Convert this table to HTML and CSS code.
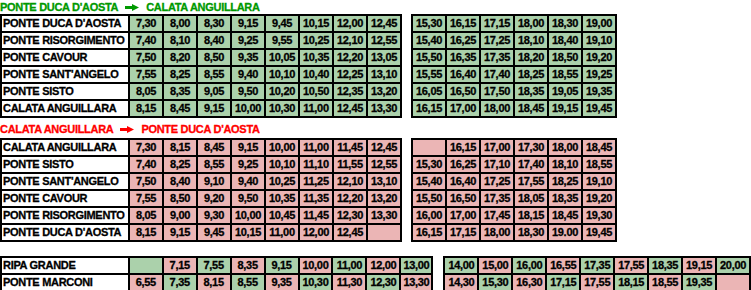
FILE: index.html
```html
<!DOCTYPE html>
<html lang="it">
<head>
<meta charset="utf-8">
<title>Orari battello</title>
<link rel="stylesheet" href="styles.css">
</head>
<body>
<div class="title green-t"><span>PONTE DUCA D'AOSTA</span><svg class="arrow" viewBox="0 0 14 7" width="14" height="7"><rect x="0" y="2" width="8" height="3"/><polygon points="7,0 14,3.5 7,7"/></svg><span>CALATA ANGUILLARA</span></div>
<div class="pair">
<table class="tt">
<tr><td class="n">PONTE DUCA D'AOSTA</td><td class="g">7,30</td><td class="g">8,00</td><td class="g">8,30</td><td class="g">9,15</td><td class="g">9,45</td><td class="g">10,15</td><td class="g">12,00</td><td class="g">12,45</td></tr>
<tr><td class="n">PONTE RISORGIMENTO</td><td class="g">7,40</td><td class="g">8,10</td><td class="g">8,40</td><td class="g">9,25</td><td class="g">9,55</td><td class="g">10,25</td><td class="g">12,10</td><td class="g">12,55</td></tr>
<tr><td class="n">PONTE CAVOUR</td><td class="g">7,50</td><td class="g">8,20</td><td class="g">8,50</td><td class="g">9,35</td><td class="g">10,05</td><td class="g">10,35</td><td class="g">12,20</td><td class="g">13,05</td></tr>
<tr><td class="n">PONTE SANT'ANGELO</td><td class="g">7,55</td><td class="g">8,25</td><td class="g">8,55</td><td class="g">9,40</td><td class="g">10,10</td><td class="g">10,40</td><td class="g">12,25</td><td class="g">13,10</td></tr>
<tr><td class="n">PONTE SISTO</td><td class="g">8,05</td><td class="g">8,35</td><td class="g">9,05</td><td class="g">9,50</td><td class="g">10,20</td><td class="g">10,50</td><td class="g">12,35</td><td class="g">13,20</td></tr>
<tr><td class="n">CALATA ANGUILLARA</td><td class="g">8,15</td><td class="g">8,45</td><td class="g">9,15</td><td class="g">10,00</td><td class="g">10,30</td><td class="g">11,00</td><td class="g">12,45</td><td class="g">13,30</td></tr>
</table>
<table class="tt">
<tr><td class="g">15,30</td><td class="g">16,15</td><td class="g">17,15</td><td class="g">18,00</td><td class="g">18,30</td><td class="g">19,00</td></tr>
<tr><td class="g">15,40</td><td class="g">16,25</td><td class="g">17,25</td><td class="g">18,10</td><td class="g">18,40</td><td class="g">19,10</td></tr>
<tr><td class="g">15,50</td><td class="g">16,35</td><td class="g">17,35</td><td class="g">18,20</td><td class="g">18,50</td><td class="g">19,20</td></tr>
<tr><td class="g">15,55</td><td class="g">16,40</td><td class="g">17,40</td><td class="g">18,25</td><td class="g">18,55</td><td class="g">19,25</td></tr>
<tr><td class="g">16,05</td><td class="g">16,50</td><td class="g">17,50</td><td class="g">18,35</td><td class="g">19,05</td><td class="g">19,35</td></tr>
<tr><td class="g">16,15</td><td class="g">17,00</td><td class="g">18,00</td><td class="g">18,45</td><td class="g">19,15</td><td class="g">19,45</td></tr>
</table>
</div>

<div class="title title2 red-t"><span>CALATA ANGUILLARA</span><svg class="arrow" viewBox="0 0 14 7" width="14" height="7"><rect x="0" y="2" width="8" height="3"/><polygon points="7,0 14,3.5 7,7"/></svg><span>PONTE DUCA D'AOSTA</span></div>
<div class="pair">
<table class="tt">
<tr><td class="n">CALATA ANGUILLARA</td><td class="p">7,30</td><td class="p">8,15</td><td class="p">8,45</td><td class="p">9,15</td><td class="p">10,00</td><td class="p">11,00</td><td class="p">11,45</td><td class="p">12,45</td></tr>
<tr><td class="n">PONTE SISTO</td><td class="p">7,40</td><td class="p">8,25</td><td class="p">8,55</td><td class="p">9,25</td><td class="p">10,10</td><td class="p">11,10</td><td class="p">11,55</td><td class="p">12,55</td></tr>
<tr><td class="n">PONTE SANT'ANGELO</td><td class="p">7,50</td><td class="p">8,40</td><td class="p">9,10</td><td class="p">9,40</td><td class="p">10,25</td><td class="p">11,25</td><td class="p">12,10</td><td class="p">13,10</td></tr>
<tr><td class="n">PONTE CAVOUR</td><td class="p">7,55</td><td class="p">8,50</td><td class="p">9,20</td><td class="p">9,50</td><td class="p">10,35</td><td class="p">11,35</td><td class="p">12,20</td><td class="p">13,20</td></tr>
<tr><td class="n">PONTE RISORGIMENTO</td><td class="p">8,05</td><td class="p">9,00</td><td class="p">9,30</td><td class="p">10,00</td><td class="p">10,45</td><td class="p">11,45</td><td class="p">12,30</td><td class="p">13,30</td></tr>
<tr><td class="n">PONTE DUCA D'AOSTA</td><td class="p">8,15</td><td class="p">9,15</td><td class="p">9,45</td><td class="p">10,15</td><td class="p">11,00</td><td class="p">12,00</td><td class="p">12,45</td><td class="p"></td></tr>
</table>
<table class="tt">
<tr><td class="p"></td><td class="p">16,15</td><td class="p">17,00</td><td class="p">17,30</td><td class="p">18,00</td><td class="p">18,45</td></tr>
<tr><td class="p">15,30</td><td class="p">16,25</td><td class="p">17,10</td><td class="p">17,40</td><td class="p">18,10</td><td class="p">18,55</td></tr>
<tr><td class="p">15,40</td><td class="p">16,40</td><td class="p">17,25</td><td class="p">17,55</td><td class="p">18,25</td><td class="p">19,10</td></tr>
<tr><td class="p">15,50</td><td class="p">16,50</td><td class="p">17,35</td><td class="p">18,05</td><td class="p">18,35</td><td class="p">19,20</td></tr>
<tr><td class="p">16,00</td><td class="p">17,00</td><td class="p">17,45</td><td class="p">18,15</td><td class="p">18,45</td><td class="p">19,30</td></tr>
<tr><td class="p">16,15</td><td class="p">17,15</td><td class="p">18,00</td><td class="p">18,30</td><td class="p">19.00</td><td class="p">19,45</td></tr>
</table>
</div>

<div class="pair pair-bottom">
<table class="tt">
<tr><td class="n">RIPA GRANDE</td><td class="g"></td><td class="p">7,15</td><td class="g">7,55</td><td class="p">8,35</td><td class="g">9,15</td><td class="p">10,00</td><td class="g">11,00</td><td class="p">12,00</td><td class="g last">13,00</td></tr>
<tr><td class="n">PONTE MARCONI</td><td class="p">6,55</td><td class="g">7,35</td><td class="p">8,15</td><td class="g">8,55</td><td class="p">9,35</td><td class="g">10,30</td><td class="p">11,30</td><td class="g">12,30</td><td class="p last">13,30</td></tr>
</table>
<table class="tt">
<tr><td class="g">14,00</td><td class="p">15,00</td><td class="g">16,00</td><td class="p">16,55</td><td class="g">17,35</td><td class="p">17,55</td><td class="g">18,35</td><td class="p">19,15</td><td class="g">20,00</td></tr>
<tr><td class="p">14,30</td><td class="g">15,30</td><td class="p">16,30</td><td class="g">17,15</td><td class="p">17,55</td><td class="g">18,15</td><td class="p">18,55</td><td class="g">19,35</td><td class="p"></td></tr>
</table>
</div>
</body>
</html>
```

FILE: styles.css
```css
html, body {
  margin: 0;
  padding: 0;
  background: #ffffff;
}

body {
  font-family: "Liberation Sans", Arial, sans-serif;
  font-size: 11px;
  font-weight: bold;
  letter-spacing: -0.3px;
  -webkit-text-stroke: 0.3px currentColor;
  color: #000000;
}

.title {
  height: 14px;
  line-height: 14px;
  white-space: nowrap;
}

.title2 {
  margin-top: 4px;
  margin-bottom: 2px;
}

.green-t { color: #009900; }
.red-t { color: #ff0000; }

.arrow {
  display: inline-block;
  vertical-align: 0;
  margin: 0 7px 0 7px;
  fill: currentColor;
}

.pair {
  display: flex;
  align-items: flex-start;
  gap: 9px;
}

.pair-bottom {
  margin-top: 14px;
  gap: 10px;
}

.tt {
  border: 1px solid #000000;
  border-collapse: separate;
  border-spacing: 0;
  table-layout: fixed;
}

.tt td {
  border: 1px solid #000000;
  padding: 0;
  height: 15px;
  line-height: 15px;
  width: 32px;
  text-align: center;
  white-space: nowrap;
}

.tt td.n {
  width: 125px;
  padding-left: 1px;
  text-align: left;
  background: #ffffff;
}

.tt td.last {
  width: 30px;
}

.g { background: #abd1ab; }
.p { background: #ebb5b5; }
```
